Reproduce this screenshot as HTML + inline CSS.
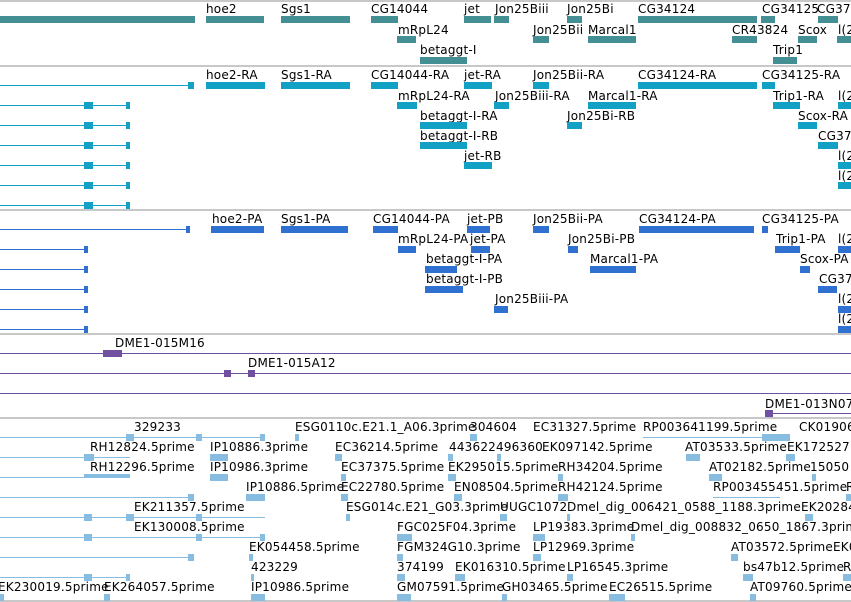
<!DOCTYPE html><html><head><meta charset="utf-8"><style>
body{margin:0;width:851px;height:602px;overflow:hidden;background:#fff;position:relative;font-family:"DejaVu Sans","Liberation Sans",sans-serif;}
.t{position:absolute;font-size:12px;line-height:14px;white-space:nowrap;color:#000;letter-spacing:0.2px}
.b{position:absolute;height:7px}
.l{position:absolute;height:1px}
.s{position:absolute;left:0;width:851px;height:2px;background:#c8c8c8}
.g{background:#438f94}.c{background:#12a0c4}.p{background:#3070d0}.v{background:#7050a0}.e{background:#88bde2}
</style></head><body>
<div class="s" style="top:0"></div><div class="s" style="top:65px"></div><div class="s" style="top:209px"></div><div class="s" style="top:333px"></div><div class="s" style="top:417px"></div><div class="s" style="top:600px"></div>

<!-- track1 -->
<div class="b g" style="left:0;width:195px;top:16px"></div>
<span class="t" style="left:206px;top:2px">hoe2</span><div class="b g" style="left:206px;width:58px;top:16px"></div>
<span class="t" style="left:281px;top:2px">Sgs1</span><div class="b g" style="left:281px;width:69px;top:16px"></div>
<span class="t" style="left:371px;top:2px">CG14044</span><div class="b g" style="left:371px;width:27px;top:16px"></div>
<span class="t" style="left:464px;top:2px">jet</span><div class="b g" style="left:464px;width:27px;top:16px"></div>
<span class="t" style="left:495px;top:2px">Jon25Biii</span><div class="b g" style="left:494px;width:15px;top:16px"></div>
<span class="t" style="left:567px;top:2px">Jon25Bi</span><div class="b g" style="left:567px;width:15px;top:16px"></div>
<span class="t" style="left:638px;top:2px">CG34124</span><div class="b g" style="left:638px;width:119px;top:16px"></div>
<span class="t" style="left:762px;top:2px">CG34125</span><div class="b g" style="left:761px;width:14px;top:16px"></div>
<span class="t" style="left:817px;top:2px">CG37</span><div class="b g" style="left:818px;width:20px;top:16px"></div>
<span class="t" style="left:398px;top:23px">mRpL24</span><div class="b g" style="left:397px;width:19px;top:36px"></div>
<span class="t" style="left:533px;top:23px">Jon25Bii</span><div class="b g" style="left:533px;width:16px;top:36px"></div>
<span class="t" style="left:588px;top:23px">Marcal1</span><div class="b g" style="left:588px;width:48px;top:36px"></div>
<span class="t" style="left:732px;top:23px">CR43824</span><div class="b g" style="left:732px;width:25px;top:36px"></div>
<span class="t" style="left:798px;top:23px">Scox</span><div class="b g" style="left:798px;width:19px;top:36px"></div>
<span class="t" style="left:838px;top:23px">l(2</span><div class="b g" style="left:837px;width:14px;top:36px"></div>
<span class="t" style="left:420px;top:43px">betaggt-I</span><div class="b g" style="left:420px;width:47px;top:57px"></div>
<span class="t" style="left:773px;top:43px">Trip1</span><div class="b g" style="left:773px;width:24px;top:57px"></div>

<!-- track2 -->
<div class="l c" style="left:0;width:193px;top:85px"></div><div class="b c" style="left:188px;width:6px;top:82px"></div>
<span class="t" style="left:206px;top:68px">hoe2-RA</span><div class="b c" style="left:206px;width:59px;top:82px"></div>
<span class="t" style="left:281px;top:68px">Sgs1-RA</span><div class="b c" style="left:281px;width:69px;top:82px"></div>
<span class="t" style="left:371px;top:68px">CG14044-RA</span><div class="b c" style="left:371px;width:27px;top:82px"></div>
<span class="t" style="left:464px;top:68px">jet-RA</span><div class="b c" style="left:464px;width:28px;top:82px"></div>
<span class="t" style="left:533px;top:68px">Jon25Bii-RA</span><div class="b c" style="left:533px;width:16px;top:82px"></div>
<span class="t" style="left:638px;top:68px">CG34124-RA</span><div class="b c" style="left:638px;width:119px;top:82px"></div>
<span class="t" style="left:762px;top:68px">CG34125-RA</span><div class="b c" style="left:762px;width:13px;top:82px"></div>
<div class="l c" style="left:0;width:130px;top:105px"></div><div class="b c" style="left:84px;width:9px;top:102px"></div><div class="b c" style="left:126px;width:4px;top:102px"></div>
<div class="l c" style="left:0;width:130px;top:125px"></div><div class="b c" style="left:84px;width:9px;top:122px"></div><div class="b c" style="left:126px;width:4px;top:122px"></div>
<div class="l c" style="left:0;width:130px;top:145px"></div><div class="b c" style="left:84px;width:9px;top:142px"></div><div class="b c" style="left:126px;width:4px;top:142px"></div>
<div class="l c" style="left:0;width:130px;top:165px"></div><div class="b c" style="left:84px;width:9px;top:162px"></div><div class="b c" style="left:126px;width:4px;top:162px"></div>
<div class="l c" style="left:0;width:130px;top:185px"></div><div class="b c" style="left:84px;width:9px;top:182px"></div><div class="b c" style="left:126px;width:4px;top:182px"></div>
<div class="l c" style="left:0;width:130px;top:205px"></div><div class="b c" style="left:84px;width:9px;top:202px"></div><div class="b c" style="left:126px;width:4px;top:202px"></div>
<span class="t" style="left:398px;top:89px">mRpL24-RA</span><div class="b c" style="left:397px;width:20px;top:102px"></div>
<span class="t" style="left:495px;top:89px">Jon25Biii-RA</span><div class="b c" style="left:494px;width:15px;top:102px"></div>
<span class="t" style="left:588px;top:89px">Marcal1-RA</span><div class="b c" style="left:588px;width:48px;top:102px"></div>
<span class="t" style="left:773px;top:89px">Trip1-RA</span><div class="b c" style="left:773px;width:27px;top:102px"></div>
<span class="t" style="left:838px;top:89px">l(2</span><div class="b c" style="left:838px;width:13px;top:102px"></div>
<span class="t" style="left:420px;top:109px">betaggt-I-RA</span><div class="b c" style="left:420px;width:47px;top:122px"></div>
<span class="t" style="left:567px;top:109px">Jon25Bi-RB</span><div class="b c" style="left:567px;width:15px;top:122px"></div>
<span class="t" style="left:798px;top:109px">Scox-RA</span><div class="b c" style="left:798px;width:19px;top:122px"></div>
<span class="t" style="left:420px;top:129px">betaggt-I-RB</span><div class="b c" style="left:420px;width:47px;top:142px"></div>
<span class="t" style="left:818px;top:129px">CG37</span><div class="b c" style="left:818px;width:20px;top:142px"></div>
<span class="t" style="left:464px;top:149px">jet-RB</span><div class="b c" style="left:464px;width:28px;top:162px"></div>
<span class="t" style="left:838px;top:149px">l(2</span><div class="b c" style="left:838px;width:13px;top:162px"></div>
<span class="t" style="left:838px;top:169px">l(2</span><div class="b c" style="left:838px;width:13px;top:182px"></div>

<!-- track3 -->
<div class="l p" style="left:0;width:190px;top:229px"></div><div class="b p" style="left:186px;width:4px;top:226px"></div>
<span class="t" style="left:212px;top:212px">hoe2-PA</span><div class="b p" style="left:211px;width:53px;top:226px"></div>
<span class="t" style="left:281px;top:212px">Sgs1-PA</span><div class="b p" style="left:281px;width:67px;top:226px"></div>
<span class="t" style="left:373px;top:212px">CG14044-PA</span><div class="b p" style="left:373px;width:25px;top:226px"></div>
<span class="t" style="left:467px;top:212px">jet-PB</span><div class="b p" style="left:467px;width:23px;top:226px"></div>
<span class="t" style="left:533px;top:212px">Jon25Bii-PA</span><div class="b p" style="left:533px;width:16px;top:226px"></div>
<span class="t" style="left:639px;top:212px">CG34124-PA</span><div class="b p" style="left:639px;width:115px;top:226px"></div>
<span class="t" style="left:762px;top:212px">CG34125-PA</span><div class="b p" style="left:762px;width:6px;top:226px"></div>
<div class="l p" style="left:0;width:88px;top:249px"></div><div class="b p" style="left:84px;width:4px;top:246px"></div>
<div class="l p" style="left:0;width:88px;top:269px"></div><div class="b p" style="left:84px;width:4px;top:266px"></div>
<div class="l p" style="left:0;width:88px;top:289px"></div><div class="b p" style="left:84px;width:4px;top:286px"></div>
<div class="l p" style="left:0;width:88px;top:309px"></div><div class="b p" style="left:84px;width:4px;top:306px"></div>
<div class="l p" style="left:0;width:88px;top:329px"></div><div class="b p" style="left:84px;width:4px;top:326px"></div>
<span class="t" style="left:398px;top:232px">mRpL24-PA</span><div class="b p" style="left:398px;width:18px;top:246px"></div>
<span class="t" style="left:470px;top:232px">jet-PA</span><div class="b p" style="left:471px;width:19px;top:246px"></div>
<span class="t" style="left:568px;top:232px">Jon25Bi-PB</span><div class="b p" style="left:568px;width:10px;top:246px"></div>
<span class="t" style="left:776px;top:232px">Trip1-PA</span><div class="b p" style="left:775px;width:25px;top:246px"></div>
<span class="t" style="left:838px;top:232px">l(2</span><div class="b p" style="left:838px;width:13px;top:246px"></div>
<span class="t" style="left:426px;top:252px">betaggt-I-PA</span><div class="b p" style="left:425px;width:32px;top:266px"></div>
<span class="t" style="left:590px;top:252px">Marcal1-PA</span><div class="b p" style="left:590px;width:46px;top:266px"></div>
<span class="t" style="left:800px;top:252px">Scox-PA</span><div class="b p" style="left:800px;width:10px;top:266px"></div>
<span class="t" style="left:426px;top:272px">betaggt-I-PB</span><div class="b p" style="left:425px;width:38px;top:286px"></div>
<span class="t" style="left:819px;top:272px">CG37</span><div class="b p" style="left:818px;width:19px;top:286px"></div>
<span class="t" style="left:495px;top:292px">Jon25Biii-PA</span><div class="b p" style="left:494px;width:14px;top:306px"></div>
<span class="t" style="left:838px;top:292px">l(2</span><div class="b p" style="left:838px;width:13px;top:306px"></div>
<span class="t" style="left:838px;top:312px">l(2</span><div class="b p" style="left:838px;width:13px;top:326px"></div>

<!-- track4 -->
<div class="l v" style="left:0;width:851px;top:353px"></div><div class="b v" style="left:103px;width:19px;top:350px"></div>
<span class="t" style="left:115px;top:336px">DME1-015M16</span>
<div class="l v" style="left:0;width:851px;top:373px"></div><div class="b v" style="left:224px;width:7px;top:370px"></div><div class="b v" style="left:248px;width:7px;top:370px"></div>
<span class="t" style="left:248px;top:356px">DME1-015A12</span>
<div class="l v" style="left:0;width:851px;top:393px"></div>
<div class="l v" style="left:765px;width:86px;top:413px"></div><div class="b v" style="left:765px;width:8px;top:410px"></div>
<span class="t" style="left:765px;top:397px">DME1-013N07</span>

<!-- track5 -->
<div class="l e" style="left:0;width:130px;top:437px"></div><div class="l e" style="left:134px;width:130px;top:437px"></div><div class="l e" style="left:643px;width:147px;top:437px"></div>
<div class="l e" style="left:0;width:130px;top:457px"></div><div class="l e" style="left:0;width:130px;top:477px"></div>
<div class="l e" style="left:0;width:193px;top:497px"></div><div class="l e" style="left:713px;width:67px;top:497px"></div>
<div class="l e" style="left:0;width:265px;top:517px"></div><div class="l e" style="left:0;width:265px;top:537px"></div>
<div class="l e" style="left:0;width:193px;top:557px"></div><div class="l e" style="left:0;width:130px;top:577px"></div>
<div class="b e" style="left:126px;width:8px;top:434px"></div><div class="b e" style="left:196px;width:6px;top:434px"></div><div class="b e" style="left:260px;width:5px;top:434px"></div><div class="b e" style="left:295px;width:4px;top:434px"></div><div class="b e" style="left:470px;width:7px;top:434px"></div><div class="b e" style="left:762px;width:28px;top:434px"></div>
<div class="b e" style="left:84px;width:10px;top:454px"></div><div class="b e" style="left:210px;width:18px;top:454px"></div><div class="b e" style="left:335px;width:7px;top:454px"></div><div class="b e" style="left:448px;width:5px;top:454px"></div><div class="b e" style="left:497px;width:4px;top:454px"></div><div class="b e" style="left:686px;width:14px;top:454px"></div><div class="b e" style="left:786px;width:9px;top:454px"></div>
<div class="b e" style="left:84px;width:46px;top:474px;height:4px"></div><div class="b e" style="left:210px;width:18px;top:474px"></div><div class="b e" style="left:341px;width:5px;top:474px"></div><div class="b e" style="left:448px;width:8px;top:474px"></div><div class="b e" style="left:558px;width:5px;top:474px"></div><div class="b e" style="left:709px;width:13px;top:474px"></div><div class="b e" style="left:812px;width:4px;top:474px"></div>
<div class="b e" style="left:188px;width:6px;top:494px"></div><div class="b e" style="left:246px;width:19px;top:494px"></div><div class="b e" style="left:341px;width:7px;top:494px"></div><div class="b e" style="left:454px;width:8px;top:494px"></div><div class="b e" style="left:558px;width:10px;top:494px"></div><div class="b e" style="left:846px;width:5px;top:494px"></div>
<div class="b e" style="left:84px;width:8px;top:514px"></div><div class="b e" style="left:126px;width:8px;top:514px"></div><div class="b e" style="left:196px;width:6px;top:514px"></div><div class="b e" style="left:346px;width:4px;top:514px"></div><div class="b e" style="left:500px;width:7px;top:514px"></div><div class="b e" style="left:567px;width:3px;top:514px"></div><div class="b e" style="left:805px;width:8px;top:514px"></div>
<div class="b e" style="left:84px;width:8px;top:534px"></div><div class="b e" style="left:196px;width:6px;top:534px"></div><div class="b e" style="left:260px;width:5px;top:534px"></div><div class="b e" style="left:397px;width:15px;top:534px"></div><div class="b e" style="left:533px;width:12px;top:534px"></div><div class="b e" style="left:631px;width:4px;top:534px"></div>
<div class="b e" style="left:188px;width:6px;top:554px"></div><div class="b e" style="left:249px;width:4px;top:554px"></div><div class="b e" style="left:397px;width:6px;top:554px"></div><div class="b e" style="left:533px;width:8px;top:554px"></div><div class="b e" style="left:731px;width:7px;top:554px"></div>
<div class="b e" style="left:84px;width:8px;top:574px"></div><div class="b e" style="left:126px;width:4px;top:574px"></div><div class="b e" style="left:251px;width:3px;top:574px"></div><div class="b e" style="left:397px;width:8px;top:574px"></div><div class="b e" style="left:455px;width:10px;top:574px"></div><div class="b e" style="left:567px;width:6px;top:574px"></div><div class="b e" style="left:743px;width:10px;top:574px"></div><div class="b e" style="left:843px;width:8px;top:574px"></div>
<div class="b e" style="left:0;width:4px;top:594px"></div><div class="b e" style="left:104px;width:6px;top:594px"></div><div class="b e" style="left:251px;width:14px;top:594px"></div><div class="b e" style="left:397px;width:14px;top:594px"></div><div class="b e" style="left:502px;width:5px;top:594px"></div><div class="b e" style="left:609px;width:16px;top:594px"></div><div class="b e" style="left:750px;width:6px;top:594px"></div>

<span class="t" style="left:134px;top:420px">329233</span><span class="t" style="left:295px;top:420px">ESG0110c.E21.1_A06.3prime</span><span class="t" style="left:470px;top:420px">304604</span><span class="t" style="left:533px;top:420px">EC31327.5prime</span><span class="t" style="left:643px;top:420px">RP003641199.5prime</span><span class="t" style="left:799px;top:420px">CK01906</span>
<span class="t" style="left:90px;top:440px">RH12824.5prime</span><span class="t" style="left:210px;top:440px">IP10886.3prime</span><span class="t" style="left:335px;top:440px">EC36214.5prime</span><span class="t" style="left:449px;top:440px">443622496360</span><span class="t" style="left:542px;top:440px">EK097142.5prime</span><span class="t" style="left:685px;top:440px">AT03533.5prime</span><span class="t" style="left:787px;top:440px">EK172527.</span>
<span class="t" style="left:90px;top:460px">RH12296.5prime</span><span class="t" style="left:210px;top:460px">IP10986.3prime</span><span class="t" style="left:341px;top:460px">EC37375.5prime</span><span class="t" style="left:448px;top:460px">EK295015.5prime</span><span class="t" style="left:558px;top:460px">RH34204.5prime</span><span class="t" style="left:709px;top:460px">AT02182.5prime</span><span class="t" style="left:810px;top:460px">15050</span>
<span class="t" style="left:246px;top:480px">IP10886.5prime</span><span class="t" style="left:341px;top:480px">EC22780.5prime</span><span class="t" style="left:454px;top:480px">EN08504.5prime</span><span class="t" style="left:558px;top:480px">RH42124.5prime</span><span class="t" style="left:713px;top:480px">RP003455451.5prime</span><span class="t" style="left:846px;top:480px">R</span>
<span class="t" style="left:134px;top:500px">EK211357.5prime</span><span class="t" style="left:346px;top:500px">ESG014c.E21_G03.3prime</span><span class="t" style="left:500px;top:500px">UUGC1072</span><span class="t" style="left:567px;top:500px">Dmel_dig_006421_0588_1188.3prime</span><span class="t" style="left:801px;top:500px">EK20284</span>
<span class="t" style="left:134px;top:520px">EK130008.5prime</span><span class="t" style="left:397px;top:520px">FGC025F04.3prime</span><span class="t" style="left:533px;top:520px">LP19383.3prime</span><span class="t" style="left:631px;top:520px">Dmel_dig_008832_0650_1867.3prime</span>
<span class="t" style="left:249px;top:540px">EK054458.5prime</span><span class="t" style="left:397px;top:540px">FGM324G10.3prime</span><span class="t" style="left:533px;top:540px">LP12969.3prime</span><span class="t" style="left:731px;top:540px">AT03572.5prime</span><span class="t" style="left:833px;top:540px">EK0</span>
<span class="t" style="left:251px;top:560px">423229</span><span class="t" style="left:397px;top:560px">374199</span><span class="t" style="left:455px;top:560px">EK016310.5prime</span><span class="t" style="left:567px;top:560px">LP16545.3prime</span><span class="t" style="left:743px;top:560px">bs47b12.5prime</span><span class="t" style="left:843px;top:560px">R</span>
<span class="t" style="left:-2px;top:580px">EK230019.5prime</span><span class="t" style="left:104px;top:580px">EK264057.5prime</span><span class="t" style="left:251px;top:580px">IP10986.5prime</span><span class="t" style="left:397px;top:580px">GM07591.5prime</span><span class="t" style="left:502px;top:580px">GH03465.5prime</span><span class="t" style="left:609px;top:580px">EC26515.5prime</span><span class="t" style="left:750px;top:580px">AT09760.5prime</span>
</body></html>
